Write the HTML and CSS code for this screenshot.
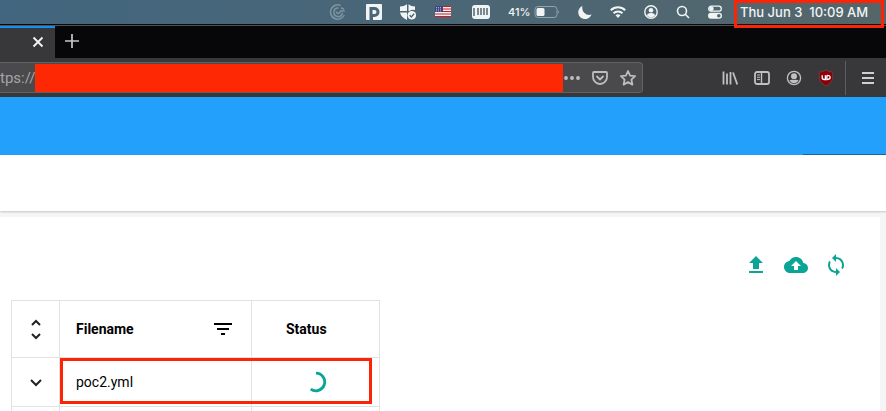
FILE: index.html
```html
<!DOCTYPE html>
<html lang="en">
<head>
<meta charset="utf-8">
<title>Files</title>
<link rel="stylesheet" href="styles.css">
</head>
<body>
<header class="menubar">
  <svg class="wide" viewBox="0 0 20 18" fill="none" stroke="#7f95a1" stroke-width="1.500" stroke-linecap="round"><path d="M12 2.200A7.200 7.200 0 1 0 16 12.500M10 5a4.300 4.300 0 1 0 4.300 5.500M8.500 9.200q1.500 2 3.200.3l1-1.500h3.500M13.500 5l2 1"/></svg>
  <svg class="std" viewBox="0 0 16 18"><path fill="#f1f4f5" fill-rule="evenodd" d="M1 1h14q1 0 1 1v14q0 1-1 1H7v-3h1.500a5 5 0 0 0 0-10H3.500V17H1q-1 0-1-1V2q0-1 1-1zM6.500 7h2a2 2 0 0 1 0 4h-2z"/></svg>
  <svg class="std" viewBox="0 0 16 18"><path fill="#f1f4f5" d="M7 1.200v6.800H0V3.500Q4 3.500 7 1.200zM8.500 1.200Q11 3.500 15 3.500V7Q12 6 9.500 8h-1zM0 9.500h7V17Q1 14 0 9.500z"/><circle cx="11.800" cy="12.300" r="4.300" fill="#f1f4f5"/><path d="M9.700 12.300l1.600 1.700 2.800-3.300" fill="none" stroke="#4c6674" stroke-width="1.400"/></svg>
  <svg class="wide" viewBox="0 0 20 18"><path fill="#f3eeee" d="M1 3h16v11H1z"/><path stroke="#c3202c" stroke-width="1.100" d="M1 3.500h16M1 6h16M1 8.500h16M1 11h16M1 13.500h16"/><path fill="#3d4480" d="M1 3h8v6H1z"/><path stroke="#c9cce0" stroke-width=".8" stroke-dasharray="1 1" d="M2 4.500h6M2 6.200h6M2 7.900h6"/></svg>
  <svg class="mem" viewBox="0 0 18 18"><rect y="2" width="18" height="14" rx="3" fill="#f1f4f5"/><path stroke="#50666f" stroke-width="1.500" d="M2 5v8M6 5v7M9 5v7M12 5v7M15 5v7"/></svg>
  <span class="power">41%<svg class="battery" viewBox="0 0 26 14"><rect x="1" y="1.500" width="22" height="11" rx="3" fill="none" stroke="#94a3a9"/><rect x="2.500" y="3" width="8" height="8" rx="1.500" fill="#f1f4f5"/><path d="M24 5.500q2 1.500 0 3z" fill="#94a3a9"/></svg></span>
  <svg class="small" viewBox="0 0 14 18"><path fill="#f1f4f5" d="M4.500 3A7 7 0 0 0 13.500 11.500 6.800 6.800 0 1 1 4.500 3z"/></svg>
  <svg class="std" viewBox="0 0 16 18" fill="none" stroke="#f1f4f5" stroke-width="2"><path d="M.8 7.300a10.300 10.300 0 0 1 14.400 0M3.500 10.300a6.500 6.500 0 0 1 9 0"/><path d="M5.500 12.200q2.500-2 5 0L8 15z" fill="#f1f4f5" stroke="none"/></svg>
  <svg class="small" viewBox="0 0 14 18"><circle cx="7" cy="9" r="6.200" fill="none" stroke="#f1f4f5" stroke-width="1.400"/><circle cx="7" cy="7.300" r="2.300" fill="#f1f4f5"/><path fill="#f1f4f5" d="M3 12.500q0-2.500 4-2.500t4 2.500Q9 14.500 7 14.500T3 12.500z"/></svg>
  <svg class="small" viewBox="0 0 14 18" fill="none" stroke="#f1f4f5" stroke-width="1.600"><circle cx="6" cy="8" r="4.500"/><path d="M9.300 11.300L13 15"/></svg>
  <svg class="small" viewBox="0 0 14 18"><rect x=".7" y="3.200" width="12.600" height="5" rx="2.500" fill="none" stroke="#f1f4f5" stroke-width="1.300"/><circle cx="3.500" cy="5.700" r="2.200" fill="#f1f4f5"/><rect y="9.800" width="14" height="6" rx="3" fill="#f1f4f5"/><circle cx="10.800" cy="12.800" r="1.800" fill="#52666e"/></svg>
  <time class="clock">Thu Jun 3&nbsp; 10:09 AM</time>
</header>
<div class="tabs">
  <div class="tab"><button class="plain" aria-label="Close tab"><svg class="small" viewBox="0 0 14 18"><path d="M2.500 3.500l9 9m0-9l-9 9" stroke="#f4f4f5" stroke-width="1.800"/></svg></button></div>
  <button class="plain new" aria-label="New tab"><svg class="std" viewBox="0 0 16 18"><path d="M1 8h14M8 1v14" stroke="#c7c7c9" stroke-width="1.700"/></svg></button>
</div>
<nav class="toolbar">
  <div class="address">
    <input class="url" aria-label="Address" value="tps://p">
    <span class="redaction"></span>
    <button class="plain" aria-label="Page actions"><svg class="std" viewBox="0 0 16 18" fill="#c0c0c2"><circle cx="2" cy="9" r="1.900"/><circle cx="8" cy="9" r="1.900"/><circle cx="14" cy="9" r="1.900"/></svg></button>
    <button class="plain" aria-label="Save to Pocket"><svg class="std" viewBox="0 0 16 18" fill="none" stroke="#bdbdbf" stroke-width="1.800" stroke-linecap="round" stroke-linejoin="round"><path d="M2 3h12q1 0 1 1v4a7 7 0 0 1-14 0V4q0-1 1-1z"/><path d="M5 7.500l3 3 3-3"/></svg></button>
    <button class="plain" aria-label="Bookmark"><svg class="std" viewBox="0 0 16 18"><path fill="none" stroke="#bdbdbf" stroke-width="1.800" stroke-linejoin="round" d="M8 2l2.100 4.600 5 .6-3.700 3.400 1 5L8 13.100l-4.400 2.500 1-5L.9 7.200l5-.6z"/></svg></button>
  </div>
  <div class="tools">
    <button class="plain" aria-label="Library"><svg class="std" viewBox="0 0 16 18"><path d="M1.500 2.500v13M5 4.500v11M8.500 3v12.500M11 3.500l4.300 12" stroke="#c0c0c2" stroke-width="1.800"/></svg></button>
    <button class="plain" aria-label="Sidebars"><svg class="std" viewBox="0 0 16 18" fill="none" stroke="#c0c0c2"><rect x="1" y="3" width="14" height="12" rx="2" stroke-width="1.800"/><path d="M7.500 3v12" stroke-width="1.400"/><path d="M3 6h3M3 8.300h3M3 10.600h3"/></svg></button>
    <button class="plain" aria-label="Account"><svg class="std" viewBox="0 0 16 18"><circle cx="8" cy="9" r="6.600" fill="none" stroke="#c0c0c2" stroke-width="1.300"/><circle cx="8" cy="7.200" r="3" fill="#c0c0c2"/><path fill="#c0c0c2" d="M3.500 11q2 .2 2.500-.5 2 1 4 0 .5.700 2.500.5Q11 14.200 8 14.200T3.500 11z"/></svg></button>
    <button class="plain" aria-label="uBlock Origin"><svg class="std" viewBox="0 0 16 18"><path fill="#8c0009" stroke="#74454a" stroke-width=".7" d="M8 1q3 2 6.800 2v5q0 5.500-6.800 9Q1.200 13.500 1.200 8V3Q5 3 8 1z"/><path d="M4.200 6.300v2.200q0 2 2 2h1.200V6.300M8.900 6.300v4.200q3.200 0 3.200-2.100T8.900 6.300" fill="none" stroke="#fff" stroke-width="1.300"/></svg></button>
    <button class="plain menu" aria-label="Menu"><svg class="small" viewBox="0 0 14 18"><path d="M1 4h12M1 9h12M1 14h12" stroke="#d0d0d2" stroke-width="1.800"/></svg></button>
  </div>
</nav>
<div class="banner"></div>
<div class="subheader"></div>
<main class="panel">
  <div class="actions">
    <button class="plain" aria-label="Upload"><svg class="action" viewBox="0 0 24 24"><path d="M9 16h6v-6h4l-7-7-7 7h4zm-4 2h14v2H5z"/></svg></button>
    <button class="plain" aria-label="Upload to cloud"><svg class="action" viewBox="0 0 24 24"><path d="M19.350 10.040C18.670 6.590 15.640 4 12 4 9.110 4 6.600 5.640 5.350 8.040 2.340 8.360 0 10.910 0 14c0 3.310 2.690 6 6 6h13c2.760 0 5-2.240 5-5 0-2.640-2.050-4.780-4.650-4.960zM14 13v4h-4v-4H7l5-5 5 5h-3z"/></svg></button>
    <button class="plain" aria-label="Refresh"><svg class="action" viewBox="0 0 24 24"><path d="M12 4V1L8 5l4 4V6c3.310 0 6 2.690 6 6 0 1.010-.25 1.970-.7 2.800l1.460 1.460C19.540 15.030 20 13.570 20 12c0-4.420-3.580-8-8-8zm0 14c-3.310 0-6-2.690-6-6 0-1.010.25-1.970.7-2.800L5.240 7.740C4.460 8.970 4 10.430 4 12c0 4.420 3.580 8 8 8v3l4-4-4-4v3z"/></svg></button>
  </div>
  <div class="listing">
    <table>
      <thead><tr>
        <th class="toggle"><button class="plain" aria-label="Expand all"><svg class="chevron" viewBox="0 0 16 24"><path d="M4 8l4-4 4 4M4 17l4 4 4-4"/></svg></button></th>
        <th class="name"><div class="heading">Filename<button class="plain" aria-label="Filter"><svg class="filter" viewBox="0 0 18 12"><path d="M0 1h18M3 6h12M7 11h4" stroke="#000" stroke-width="2"/></svg></button></div></th>
        <th class="status">Status</th>
      </tr></thead>
      <tbody>
        <tr>
          <td class="toggle"><button class="plain" aria-label="Expand row"><svg class="chevron" viewBox="0 0 16 24"><path d="M3 10l5 5 5-5"/></svg></button></td>
          <td class="name">poc2.yml</td>
          <td class="status"><svg class="spinner" viewBox="0 0 22 22" role="img" aria-label="Loading"><path d="M11 2.200a8.800 8.800 0 1 1-5.300 15.900" fill="none" stroke="#0aa594" stroke-width="2.800"/></svg></td>
        </tr>
        <tr><td></td><td></td><td></td></tr>
      </tbody>
    </table>
    <span class="mark"></span>
  </div>
</main>
</body>
</html>
```
FILE: styles.css
```css
* { box-sizing: border-box; }

body {
  margin: 0;
  height: 100vh;
  overflow: hidden;
  display: flex;
  flex-direction: column;
  background: #f5f5f5;
  color: #000;
  font-family: Roboto, sans-serif;
  font-size: 14px;
}

svg { display: block; flex: none; }

.plain {
  display: block;
  padding: 0;
  border: 0;
  background: none;
}

.small { width: 14px; height: 18px; }
.std { width: 16px; height: 18px; }
.mem { width: 18px; height: 18px; }
.wide { width: 20px; height: 18px; }

.menubar {
  flex: none;
  display: flex;
  justify-content: flex-end;
  align-items: center;
  gap: 18px;
  height: 25px;
  padding-right: 18px;
  border-bottom: 1px solid #08090b;
  background: linear-gradient(90deg, #42667f, #4b6676 50%, #54666a);
  color: #f1f4f5;
  font-family: Inter, sans-serif;
}

.power {
  display: flex;
  align-items: center;
  justify-content: space-between;
  width: 52px;
  font-size: 11px;
  font-weight: 500;
}

.battery { width: 26px; height: 14px; }

.clock {
  position: relative;
  width: 128px;
  font-size: 13px;
  font-weight: 500;
  line-height: 24px;
  white-space: nowrap;
}

.clock::after {
  content: "";
  position: absolute;
  inset: 0 -16px -4px -6px;
  border: 3px solid #fb2406;
  z-index: 1;
}

.tabs {
  flex: none;
  display: flex;
  height: 33px;
  border-top: 1px solid #515153;
  background: #070709;
}

.tab {
  display: flex;
  align-items: center;
  justify-content: flex-end;
  width: 55px;
  padding-right: 10px;
  border-top: 2px solid #1490f5;
  background: #38383a;
}

.new { margin-left: 9px; }

.toolbar {
  flex: none;
  display: flex;
  align-items: center;
  justify-content: space-between;
  height: 39px;
  background: #38383a;
}

.address {
  flex: 1;
  display: flex;
  align-items: center;
  gap: 12px;
  height: 31px;
  margin-right: 79px;
  padding-right: 6px;
  border: 1px solid #626264;
  border-left: 0;
  border-radius: 0 4px 4px 0;
  background: #4a4a4c;
}

.url {
  width: 35px;
  margin-right: -12px;
  padding: 0;
  border: 0;
  background: none;
  color: #a5a5a7;
  font-family: Roboto, sans-serif;
  font-size: 15px;
}

.redaction {
  flex: 1;
  height: 28px;
  margin-right: -11px;
  background: #ff2805;
}

.tools {
  display: flex;
  align-items: center;
  gap: 16px;
  padding-right: 11px;
}

.menu {
  margin-left: -5px;
  padding: 8px 0 8px 15px;
  border-left: 1px solid #5e5e60;
}

.banner {
  flex: none;
  height: 58px;
  background: linear-gradient(#1e659b, #1e659b) right bottom / 83px 1px no-repeat, #22a0fb;
}

.subheader {
  flex: none;
  height: 56px;
  background: #fff;
  box-shadow: 0 1px 2px #0003;
}

.panel {
  flex: 1;
  min-height: 0;
  margin: 6px 6px 0 0;
  padding: 36px 32px 0 11px;
  overflow: hidden;
  background: #fff;
}

.actions {
  display: flex;
  justify-content: flex-end;
  gap: 16px;
  margin-bottom: 23px;
}

.action {
  width: 24px;
  height: 24px;
  fill: #0aa594;
}

.listing {
  position: relative;
  width: 369px;
}

table {
  width: 100%;
  border-collapse: collapse;
  table-layout: fixed;
}

th, td {
  height: 49px;
  padding: 0;
  border: 1px solid #e2e2e2;
  text-align: left;
}

th {
  height: 57px;
  font-weight: 700;
}

.toggle { width: 48px; }
.toggle .plain { margin: 0 auto; }
.name { width: 192px; padding: 0 16px; }
th.status { padding-left: 34px; }

.chevron {
  width: 16px;
  height: 24px;
  fill: none;
  stroke: #222;
  stroke-width: 2;
}

.heading {
  display: flex;
  align-items: center;
  justify-content: space-between;
}

.filter { width: 18px; height: 12px; margin-right: 3px; }

.spinner { width: 22px; height: 22px; margin: 0 auto; }

.mark {
  position: absolute;
  top: 58px;
  left: 49px;
  right: 8px;
  height: 46px;
  border: 3px solid #fb2406;
}
```
